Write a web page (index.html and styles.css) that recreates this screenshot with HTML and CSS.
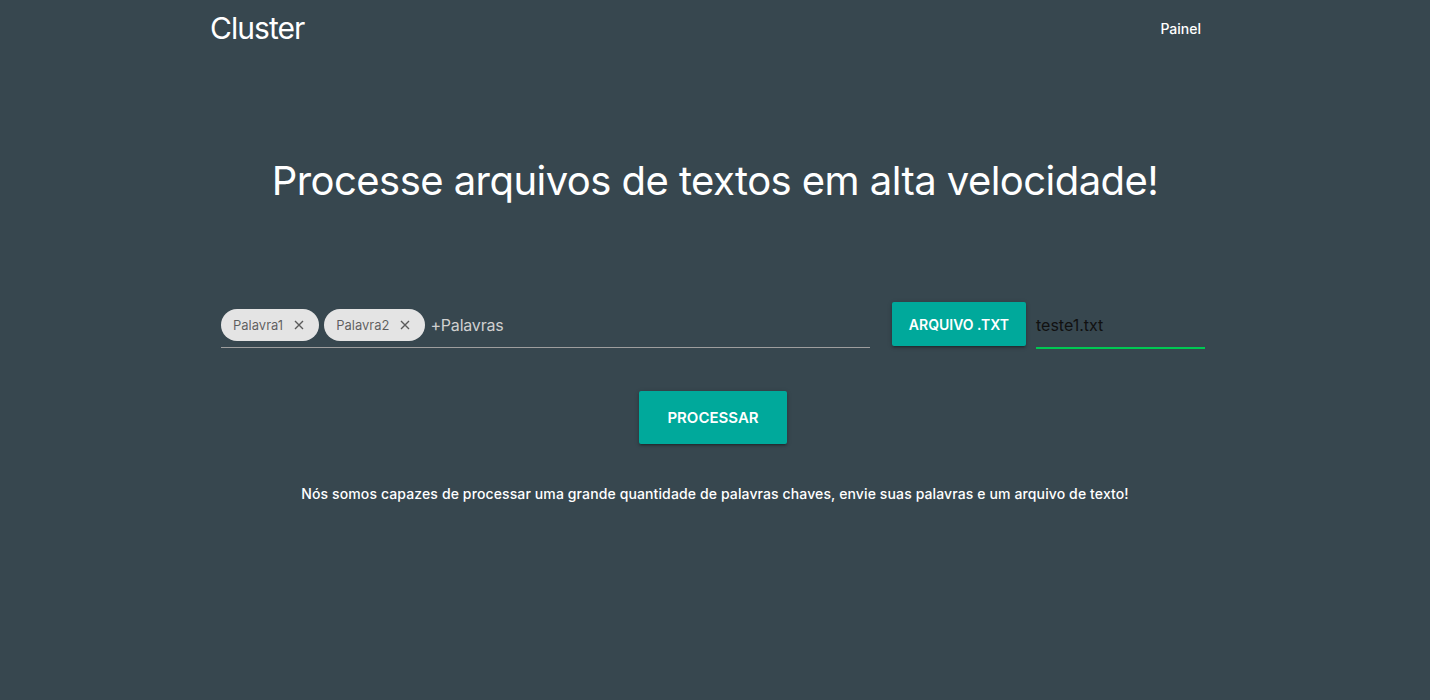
FILE: index.html
```html
<!DOCTYPE html>
<html lang="pt">
<head>
<meta charset="utf-8">
<title>Cluster</title>
<link rel="stylesheet" href="styles.css">
</head>
<body>
<nav class="nav">
  <div class="container nav-inner">
    <a class="brand" href="#">Cluster</a>
    <a class="nav-link" href="#">Painel</a>
  </div>
</nav>
<main class="container main">
  <h1 class="title">Processe arquivos de textos em alta velocidade!</h1>
  <div class="form-row">
    <div class="chips">
      <span class="chip">Palavra1<svg class="chip-x" viewBox="0 0 10 10" width="10" height="10"><path d="M1 1L9 9M9 1L1 9"/></svg></span>
      <span class="chip">Palavra2<svg class="chip-x" viewBox="0 0 10 10" width="10" height="10"><path d="M1 1L9 9M9 1L1 9"/></svg></span>
      <span class="chips-placeholder">+Palavras</span>
    </div>
    <div class="file-field">
      <span class="btn btn-file">ARQUIVO .TXT</span>
      <span class="file-path">teste1.txt</span>
    </div>
  </div>
  <div class="actions">
    <button class="btn btn-large">PROCESSAR</button>
  </div>
  <p class="note">Nós somos capazes de processar uma grande quantidade de palavras chaves, envie suas palavras e um arquivo de texto!</p>
</main>
</body>
</html>
```

FILE: styles.css
```css
* { box-sizing: border-box; }
html, body { margin: 0; padding: 0; }
body {
  background: #37474f;
  color: #fff;
  font-family: Inter, Roboto, "Liberation Sans", Arial, sans-serif;
  height: 700px;
}
.container {
  width: 1002px;
  margin: 0 auto;
}
.nav { height: 56px; }
.nav-inner {
  display: flex;
  align-items: center;
  justify-content: space-between;
  height: 56px;
}
.brand {
  color: #fff;
  text-decoration: none;
  font-family: Inter, Roboto, sans-serif;
  font-size: 30px;
  letter-spacing: -0.95px;
  margin-left: -4px;
}
.nav-link {
  color: #fff;
  text-decoration: none;
  font-size: 14px;
  font-weight: 500;
  padding: 0 15px;
}
.title {
  margin: 98px 0 0;
  text-align: center;
  font-weight: 400;
  font-size: 40px;
  line-height: 54px;
  letter-spacing: -0.55px;
}
.form-row {
  display: flex;
  align-items: flex-end;
  margin-top: 94px;
  padding: 0 0 0 7px;
}
.chips {
  width: 649px;
  display: flex;
  align-items: center;
  gap: 5px;
  border-bottom: 1px solid #9e9e9e;
  padding-bottom: 6px;
  margin-bottom: -1px;
}
.chip {
  display: inline-flex;
  align-items: center;
  height: 32px;
  border-radius: 16px;
  background: #e4e4e4;
  color: rgba(0,0,0,.6);
  font-size: 13px;
  padding: 0 15px 0 12px;
}
.chip-x {
  margin-left: 11px;
  fill: none;
  stroke: rgba(0,0,0,.6);
  stroke-width: 1.4;
}
.chips-placeholder {
  font-size: 16px;
  color: #d0d0d0;
  letter-spacing: -0.2px;
}
.file-field {
  display: flex;
  align-items: flex-end;
  margin-left: 22px;
}
.btn {
  display: inline-flex;
  align-items: center;
  justify-content: center;
  background: #00a99b;
  color: #fff;
  border: none;
  border-radius: 2px;
  font-family: Inter, Roboto, "Liberation Sans", Arial, sans-serif;
  font-weight: 600;
  box-shadow: 0 2px 2px 0 rgba(0,0,0,.14), 0 3px 1px -2px rgba(0,0,0,.12), 0 1px 5px 0 rgba(0,0,0,.2);
}
.btn-file {
  width: 134px;
  height: 44px;
  font-size: 14px;
  margin-bottom: 1px;
}
.file-path {
  width: 169px;
  margin-left: 10px;
  font-size: 16px;
  color: #111;
  border-bottom: 2px solid #00c853;
  padding: 0 0 12px 0;
  line-height: 20px;
  margin-bottom: -2px;
}
.actions {
  display: flex;
  justify-content: center;
  margin-top: 44px;
  padding-right: 4px;
}
.btn-large {
  width: 148px;
  height: 53px;
  font-size: 15px;
}
.note {
  text-align: center;
  font-size: 14px;
  font-weight: 500;
  letter-spacing: 0.12px;
  margin: 41px 0 0;
}
```
